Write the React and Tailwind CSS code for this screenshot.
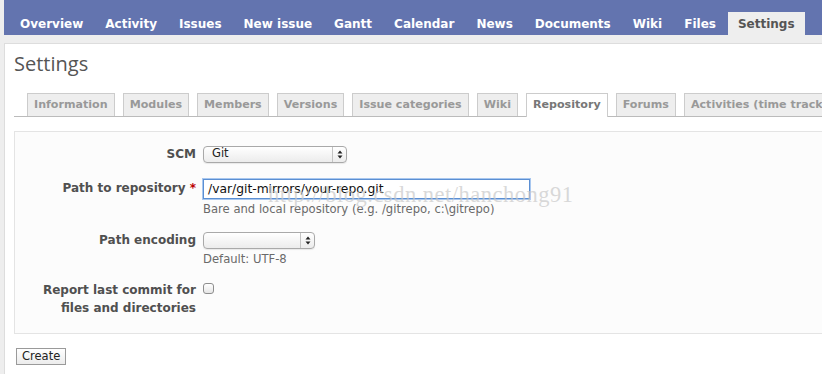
import React from "react";

const menu = ["Overview", "Activity", "Issues", "New issue", "Gantt", "Calendar", "News", "Documents", "Wiki", "Files"];
const tabs = ["Information", "Modules", "Members", "Versions", "Issue categories", "Wiki", "Repository", "Forums", "Activities (time tracking)"];

const verdana = { fontFamily: '"DejaVu Sans", Verdana, sans-serif' };

function Arrows() {
  return (
    <svg width="6" height="9" viewBox="0 0 6 9">
      <path d="M3 0.5 L5.5 3.5 L0.5 3.5 Z" fill="#222" />
      <path d="M3 8.5 L5.5 5.5 L0.5 5.5 Z" fill="#222" />
    </svg>
  );
}

function MacSelect({ width, height, value }) {
  return (
    <div
      className="flex items-stretch rounded-[4px] border border-[#a9a9a9] bg-gradient-to-b from-white to-[#ececec] shadow-[0_1px_1px_rgba(0,0,0,0.08)]"
      style={{ width, height }}
    >
      <div className="flex-1 pl-[8px] flex items-center text-[11.5px] text-[#222]">{value}</div>
      <div className="w-[14px] border-l border-[#c4c4c4] flex items-center justify-center">
        <Arrows />
      </div>
    </div>
  );
}

export default function App() {
  return (
    <div className="w-full min-h-screen bg-[#eeeeee] overflow-hidden" style={verdana}>
      <div className="w-[860px] pl-[4px]">
        {/* top menu */}
        <div className="h-[35px] bg-[#6374af] flex items-end pl-[6px]">
          {menu.map((m) => (
            <div key={m} className="h-[23px] px-[10px] mr-[2px] flex items-center text-[12px] font-bold text-white whitespace-nowrap">
              {m}
            </div>
          ))}
          <div className="h-[23px] px-[10px] flex items-center text-[12px] font-bold text-[#555] bg-[#eeeeee] whitespace-nowrap">
            Settings
          </div>
        </div>

        <div className="h-[8px]" />

        <div className="bg-white border-l border-t border-[#dddddd] pl-[9px] pb-[20px]">
          <h2 className="mt-[8px] text-[20px] leading-[24px] text-[#555]" style={{ fontFamily: '"Open Sans", sans-serif' }}>
            Settings
          </h2>

          {/* tabs */}
          <div className="mt-[17px] flex items-end pl-[13px] border-b border-[#bbbbbb] h-[24px]">
            {tabs.map((t) =>
              t === "Repository" ? (
                <div key={t} className="h-[24px] -mb-px px-[6px] mr-[8px] flex items-center border border-b-0 border-[#cccccc] bg-white text-[11.1px] font-bold text-[#777] whitespace-nowrap">
                  {t}
                </div>
              ) : (
                <div key={t} className="h-[23px] px-[6px] mr-[8px] flex items-center border border-b-0 border-[#cccccc] bg-[#eeeeee] text-[11.1px] font-bold text-[#999] whitespace-nowrap">
                  {t}
                </div>
              )
            )}
          </div>

          {/* form box */}
          <div className="relative mt-[14px] border border-[#e4e4e4] bg-[#fcfcfc] px-[6px] pt-[6px] pb-[16px] text-[#505050]">
            <div className="mt-[7px] flex items-center">
              <div className="w-[175px] text-right text-[12px] font-bold">SCM</div>
              <div className="ml-[7px]">
                <MacSelect width={144} height={17} value="Git" />
              </div>
            </div>

            <div className="mt-[16px] flex items-center">
              <div className="w-[175px] text-right text-[12px] font-bold -mt-[3px]">
                Path to repository <span className="text-[#bb0000]">*</span>
              </div>
              <div className="ml-[7px] w-[327px] h-[20px] border border-[#5b8fd3] shadow-[0_0_0_1px_#a8c7ef] bg-white flex items-center pl-[4px] text-[12.3px] text-[#111]">
                /var/git-mirrors/your-repo.git
              </div>
            </div>
            <div className="ml-[182px] mt-[2px] leading-[16px] text-[11.6px] text-[#6a6a6a]">
              Bare and local repository (e.g. /gitrepo, c:\gitrepo)
            </div>

            <div className="mt-[14px] flex items-center">
              <div className="w-[175px] text-right text-[12px] font-bold">Path encoding</div>
              <div className="ml-[7px]">
                <MacSelect width={112} height={17} value="" />
              </div>
            </div>
            <div className="ml-[182px] mt-[2px] leading-[16px] text-[11.6px] text-[#6a6a6a]">Default: UTF-8</div>

            <div className="mt-[14px] flex items-start">
              <div className="w-[175px] text-right text-[12px] leading-[18px] font-bold">
                Report last commit for files and directories
              </div>
              <div className="ml-[7px] mt-[2px] w-[11px] h-[11px] rounded-[3px] border border-[#8e8e8e] bg-gradient-to-b from-white to-[#e6e6e6]" />
            </div>

            <div
              className="absolute left-[253px] top-[52px] text-[22.5px] leading-none tracking-[0.5px] text-[#c8c8c8]/70 pointer-events-none whitespace-nowrap"
              style={{ fontFamily: '"Liberation Serif", serif' }}
            >
              http://blog.csdn.net/hanchong91
            </div>
          </div>

          <button className="mt-[14px] ml-[2px] h-[17px] px-[5px] border border-[#9a9a9a] bg-gradient-to-b from-white to-[#ececec] text-[11.5px] leading-none text-[#222]">
            Create
          </button>
        </div>
      </div>
    </div>
  );
}
